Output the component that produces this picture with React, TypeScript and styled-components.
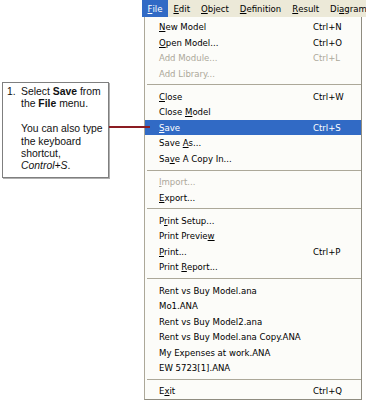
import React from "react";
import styled, { createGlobalStyle } from "styled-components";

const Global = createGlobalStyle`
  html, body { margin: 0; padding: 0; background: #ffffff; }
  body { width: 366px; height: 400px; overflow: hidden; }
`;

const Page = styled.div`
  display: flex;
  width: 366px;
  height: 400px;
  background: #ffffff;
`;

const LeftArea = styled.div`
  display: flex;
  align-items: flex-start;
  width: 142px;
  flex: none;
  position: relative;
  z-index: 2;
`;

const Callout = styled.div`
  margin: 82px 0 0 2px;
  width: 99px;
  padding: 3px 2px 4px 4px;
  border: 1px solid #7f7f7f;
  box-shadow: 1px 1px 0 #b0b0b0;
  font-family: "Liberation Sans", Arial, sans-serif;
  font-size: 10.4px;
  line-height: 12.4px;
  color: #111111;
`;

const Step = styled.div`
  display: flex;
`;

const StepNum = styled.span`
  width: 14px;
  flex: none;
`;

const StepBody = styled.div`
  display: flex;
  flex-direction: column;
`;

const Para = styled.p<{ $gap?: boolean }>`
  margin: ${(p) => (p.$gap ? "12.4px" : "0")} 0 0 0;
`;

const Connector = styled.div`
  flex: none;
  width: 41px;
  height: 2px;
  margin-top: 126px;
  margin-right: -10px;
  background: #8b1c22;
`;

const MenuArea = styled.div`
  display: flex;
  flex-direction: column;
  flex: 1;
  min-width: 0;
`;

const MenuBar = styled.div`
  display: flex;
  flex: none;
  height: 17px;
  align-items: stretch;
  background: #ece9d8;
  font-family: "DejaVu Sans Condensed", "DejaVu Sans", sans-serif;
  font-size: 9.5px;
  color: #000000;
  white-space: nowrap;
  overflow: hidden;
`;

const BarItem = styled.div<{ $active?: boolean }>`
  display: flex;
  flex: none;
  align-items: center;
  padding: 0 5.5px;
  background: ${(p) => (p.$active ? "#316ac5" : "transparent")};
  color: ${(p) => (p.$active ? "#ffffff" : "#000000")};
`;

const Panel = styled.div`
  margin: 0 4px 0 2px;
  flex: 1;
  min-height: 0;
  background: #fcfcf9;
  border-left: 1px solid #aca899;
  border-right: 1px solid #8f8c80;
  border-bottom: 1px solid #8f8c80;
  padding: 2px 0 0 0;
  font-family: "DejaVu Sans Condensed", "DejaVu Sans", sans-serif;
  font-size: 9.5px;
`;

const Item = styled.div<{ $disabled?: boolean; $selected?: boolean }>`
  display: flex;
  align-items: center;
  height: 15.5px;
  padding: 0 0 0 14px;
  background: ${(p) => (p.$selected ? "#316ac5" : "transparent")};
  color: ${(p) =>
    p.$selected ? "#ffffff" : p.$disabled ? "#aca899" : "#000000"};
  white-space: nowrap;
`;

const Label = styled.span`
  flex: 1;
`;

const Shortcut = styled.span`
  width: 48px;
  flex: none;
`;

const Separator = styled.div`
  height: 1px;
  margin: 3.35px 0 3.35px 2px;
  background: #aca899;
`;

type Entry =
  | { sep: true }
  | {
      sep?: false;
      pre: string;
      u?: string;
      post?: string;
      key?: string;
      disabled?: boolean;
      selected?: boolean;
    };

const entries: Entry[] = [
  { pre: "", u: "N", post: "ew Model", key: "Ctrl+N" },
  { pre: "", u: "O", post: "pen Model...", key: "Ctrl+O" },
  { pre: "Add Module...", key: "Ctrl+L", disabled: true },
  { pre: "Add Library...", disabled: true },
  { sep: true },
  { pre: "", u: "C", post: "lose", key: "Ctrl+W" },
  { pre: "Close ", u: "M", post: "odel" },
  { pre: "", u: "S", post: "ave", key: "Ctrl+S", selected: true },
  { pre: "Save ", u: "A", post: "s..." },
  { pre: "Sa", u: "v", post: "e A Copy In..." },
  { sep: true },
  { pre: "", u: "I", post: "mport...", disabled: true },
  { pre: "", u: "E", post: "xport..." },
  { sep: true },
  { pre: "P", u: "r", post: "int Setup..." },
  { pre: "Print Previe", u: "w", post: "" },
  { pre: "", u: "P", post: "rint...", key: "Ctrl+P" },
  { pre: "Print ", u: "R", post: "eport..." },
  { sep: true },
  { pre: "Rent vs Buy Model.ana" },
  { pre: "Mo1.ANA" },
  { pre: "Rent vs Buy Model2.ana" },
  { pre: "Rent vs Buy Model.ana Copy.ANA" },
  { pre: "My Expenses at work.ANA" },
  { pre: "EW 5723[1].ANA" },
  { sep: true },
  { pre: "E", u: "x", post: "it", key: "Ctrl+Q" },
];

const barItems: { u: string; rest: string; pre?: string; active?: boolean }[] = [
  { u: "F", rest: "ile", active: true },
  { u: "E", rest: "dit" },
  { u: "O", rest: "bject" },
  { u: "D", rest: "efinition" },
  { u: "R", rest: "esult" },
  { pre: "Di", u: "a", rest: "gram" },
];

export default function App() {
  return (
    <>
      <Global />
      <Page>
        <LeftArea>
          <Callout>
            <Step>
              <StepNum>1.</StepNum>
              <StepBody>
                <Para>
                  Select <b>Save</b> from the <b>File</b> menu.
                </Para>
                <Para $gap>You can also type the keyboard shortcut, <i>Control+S</i>.</Para>
              </StepBody>
            </Step>
          </Callout>
          <Connector />
        </LeftArea>
        <MenuArea>
          <MenuBar>
            {barItems.map((b, i) => (
              <BarItem key={i} $active={b.active}>
                {b.pre}
                <u>{b.u}</u>
                {b.rest}
              </BarItem>
            ))}
          </MenuBar>
          <Panel>
            {entries.map((e, i) =>
              e.sep ? (
                <Separator key={i} />
              ) : (
                <Item key={i} $disabled={e.disabled} $selected={e.selected}>
                  <Label>
                    {e.pre}
                    {e.u ? <u>{e.u}</u> : null}
                    {e.post}
                  </Label>
                  {e.key ? <Shortcut>{e.key}</Shortcut> : null}
                </Item>
              )
            )}
          </Panel>
        </MenuArea>
      </Page>
    </>
  );
}
